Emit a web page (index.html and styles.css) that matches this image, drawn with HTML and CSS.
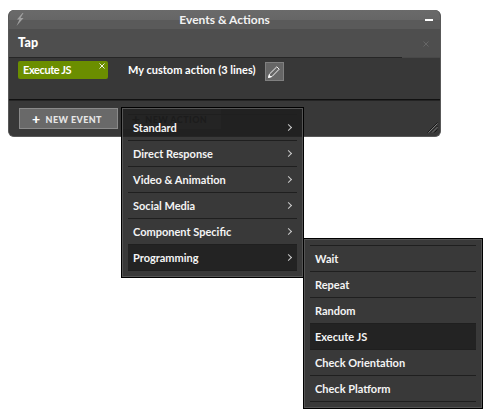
FILE: index.html
```html
<!DOCTYPE html>
<html lang="en">
<head>
  <meta charset="UTF-8">
  <title>Events &amp; Actions</title>
  <link rel="stylesheet" href="styles.css">
</head>
<body>

  <div class="panel">
    <div class="panel-title">
      <svg class="bolt" width="8" height="13" viewBox="0 0 8 13"><path d="M6.5 0 L1 6.5 L3.5 6.5 L0.5 13 L7.5 5 L4.5 5 L7.5 0 Z" fill="#a0a0a0"/></svg>
      <span class="title-text">Events &amp; Actions</span>
      <span class="minimize"></span>
    </div>
    <div class="event-head">
      <span class="event-name">Tap</span>
      <svg class="event-close" width="6" height="6" viewBox="0 0 6 6"><path d="M0.5 0.5 L5.5 5.5 M5.5 0.5 L0.5 5.5" stroke="#666" stroke-width="1"/></svg>
    </div>
    <div class="event-body">
      <div class="action-chip">Execute JS
        <svg class="chip-close" width="6" height="6" viewBox="0 0 6 6"><path d="M0.5 0.5 L5.5 5.5 M5.5 0.5 L0.5 5.5" stroke="#fff" stroke-width="0.9"/></svg>
      </div>
      <span class="action-label">My custom action (3 lines)</span>
      <button class="edit-btn">
        <svg width="12" height="12" viewBox="0 0 12 12"><path d="M0.5 11.5 L1.5 8 L8.8 0.8 L11.2 3.2 L4 10.5 Z" fill="none" stroke="#f0f0f0" stroke-width="1"/><path d="M0 12 L1 8.5 L3.5 11 Z" fill="#fff"/></svg>
      </button>
    </div>
    <div class="panel-foot">
      <button class="foot-btn"><span class="plus">+</span>NEW EVENT</button>
      <button class="foot-btn dim"><span class="plus">+</span>NEW ACTION</button>
      <svg class="grip" width="11" height="11" viewBox="0 0 11 11"><path d="M0.5 10.5 L10.5 0.5 M4 10.5 L10.5 4 M7.5 10.5 L10.5 7.5" stroke="#161616" stroke-width="1"/><path d="M1.5 10.5 L10.5 1.5 M5 10.5 L10.5 5" stroke="#9a9a9a" stroke-width="0.7"/></svg>
    </div>
  </div>

  <ul class="menu menu-main">
    <li>Standard<span class="arrow"></span></li>
    <li>Direct Response<span class="arrow"></span></li>
    <li>Video &amp; Animation<span class="arrow"></span></li>
    <li>Social Media<span class="arrow"></span></li>
    <li>Component Specific<span class="arrow"></span></li>
    <li class="active">Programming<span class="arrow"></span></li>
  </ul>

  <ul class="menu menu-sub">
    <li>Wait</li>
    <li>Repeat</li>
    <li>Random</li>
    <li class="active">Execute JS</li>
    <li>Check Orientation</li>
    <li>Check Platform</li>
  </ul>

</body>
</html>
```
FILE: styles.css
```css
html, body {
  margin: 0;
  padding: 0;
  background: #fff;
}

body {
  position: relative;
  width: 493px;
  height: 420px;
  overflow: hidden;
  font-family: "Lato", "Liberation Sans", sans-serif;
  color: #fff;
}

.panel {
  margin: 10px 0 0 8px;
  width: 433px;
  height: 127px;
  box-sizing: border-box;
  border: 1px solid #585858;
  border-top: 0;
  border-radius: 6px;
  overflow: hidden;
  background: #383838;
  display: flex;
  flex-direction: column;
}

.panel-title {
  height: 19px;
  flex: none;
  background: linear-gradient(#6a6a6a 0, #666 10px, #5a5a5a 10px, #5a5a5a 100%);
  display: flex;
  align-items: center;
  justify-content: center;
  position: relative;
}

.title-text {
  font-size: 12px;
  font-weight: 700;
  color: #f2f2f2;
}

.bolt {
  position: absolute;
  left: 7px;
  top: 3px;
}

.minimize {
  position: absolute;
  right: 7px;
  top: 9px;
  width: 8px;
  height: 2px;
  background: #fff;
}

.event-head {
  height: 29px;
  flex: none;
  box-sizing: border-box;
  background: #4e4e4e;
  border-bottom: 1px solid;
  border-image: linear-gradient(to right, #262626 392px, #484848 392px) 1;
  display: flex;
  align-items: center;
  justify-content: space-between;
  padding: 0 11px 1px 9px;
}

.event-name {
  font-size: 12.5px;
  font-weight: 900;
  letter-spacing: 0.2px;
}

.event-close {
  margin-top: 2px;
}

.event-body {
  height: 42px;
  flex: none;
  box-sizing: border-box;
  background: #383838;
  border-bottom: 1px solid #111;
  display: flex;
  align-items: flex-start;
  padding: 3px 9px 0;
}

.action-chip {
  position: relative;
  width: 90px;
  height: 18px;
  background: #6b8e00;
  border-radius: 2px;
  font-size: 11px;
  font-weight: 700;
  letter-spacing: -0.4px;
  line-height: 18px;
  padding-left: 5px;
  box-sizing: border-box;
}

.chip-close {
  position: absolute;
  right: 3px;
  top: 2px;
}

.action-label {
  margin-left: 20px;
  font-size: 11px;
  font-weight: 700;
  line-height: 18px;
}

.edit-btn {
  margin: 1px 0 0 9px;
  width: 19px;
  height: 19px;
  box-sizing: border-box;
  padding: 0;
  background: #666;
  border: 1px solid #808080;
  display: flex;
  align-items: center;
  justify-content: center;
}

.panel-foot {
  flex: 1;
  background: #383838;
  border-top: 1px solid #242424;
  display: flex;
  align-items: flex-start;
  padding: 7px 10px 0;
  gap: 3px;
  position: relative;
}

.foot-btn {
  width: 99px;
  height: 21px;
  box-sizing: border-box;
  padding: 0 3px 0 0;
  background: #696969;
  border: 1px solid #8a8a8a;
  color: #e6e6e6;
  font-family: inherit;
  font-size: 9px;
  font-weight: 900;
  letter-spacing: 0.4px;
}

.foot-btn .plus {
  font-size: 14px;
  color: #fff;
  margin-right: 5px;
  vertical-align: -1px;
}

.foot-btn.dim {
  width: 100px;
  background: #505050;
  border-color: #505050;
  color: #111;
}

.foot-btn.dim .plus {
  color: #111;
}

.grip {
  position: absolute;
  right: 2px;
  bottom: 3px;
}

.menu {
  position: absolute;
  margin: 0;
  list-style: none;
  box-sizing: border-box;
  padding: 6px;
  background: rgba(30, 30, 30, 0.88);
  border: 1px solid #000;
  outline: 1px solid #555;
  outline-offset: -2px;
}

.menu li {
  height: 26px;
  box-sizing: border-box;
  border-top: 1px solid #1f1f1f;
  font-size: 11px;
  font-weight: 700;
  line-height: 25px;
  padding-left: 5px;
  position: relative;
  color: #f4f4f4;
}

.menu li:last-child {
  border-bottom: 1px solid #1f1f1f;
  height: 27px;
}

.menu li.active {
  background: #232323;
}

.menu-main {
  left: 121px;
  top: 107px;
  width: 183px;
}

.menu-sub {
  left: 303px;
  top: 238px;
  width: 180px;
}

.arrow {
  position: absolute;
  right: 6px;
  top: 10px;
  width: 4px;
  height: 4px;
  border-top: 1px solid #ccc;
  border-right: 1px solid #ccc;
  transform: rotate(45deg);
}
```
